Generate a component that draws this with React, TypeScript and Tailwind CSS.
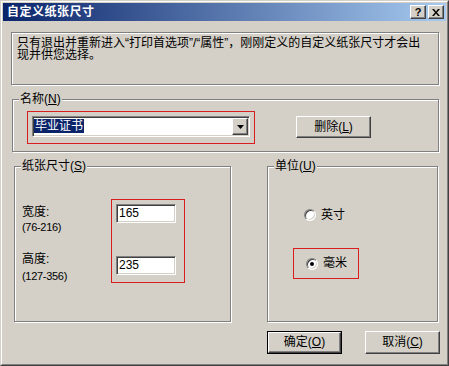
import React from "react";

const raised =
  "border border-t-white border-l-white border-r-[#404040] border-b-[#404040] shadow-[inset_-1px_-1px_0_#808080] bg-[#d4d0c8]";
const sunken =
  "border border-t-[#808080] border-l-[#808080] border-r-white border-b-white shadow-[inset_1px_1px_0_#404040,inset_-1px_-1px_0_#d4d0c8] bg-white";
const etched = "border border-[#808080] shadow-[inset_1px_1px_0_#fff,1px_1px_0_#fff]";

function Group({
  label,
  className,
  children,
}: {
  label: React.ReactNode;
  className: string;
  children?: React.ReactNode;
}) {
  return (
    <div className={`relative ${etched} ${className}`}>
      <span className="absolute left-[6px] top-[-7px] bg-[#d4d0c8] px-[1px] text-[12px] leading-[13px] whitespace-nowrap">
        {label}
      </span>
      {children}
    </div>
  );
}

function Radio({ checked }: { checked?: boolean }) {
  return (
    <div className="w-[12px] h-[12px] shrink-0 rounded-full border border-t-[#808080] border-l-[#808080] border-r-white border-b-white bg-white shadow-[inset_1px_1px_0_#404040,inset_-1px_-1px_0_#d4d0c8] flex items-center justify-center">
      {checked && <div className="w-[4px] h-[4px] rounded-full bg-black" />}
    </div>
  );
}

function U({ children }: { children: React.ReactNode }) {
  return <span className="underline underline-offset-[1px]">{children}</span>;
}

export default function App() {
  return (
    <div className="w-[449px] h-[366px] bg-[#d4d0c8] border border-t-[#d4d0c8] border-l-[#d4d0c8] border-r-[#404040] border-b-[#404040] font-['Liberation_Sans','Noto_Sans_CJK_SC',sans-serif] text-black text-[12px]">
      <div className="h-full border border-t-white border-l-white border-r-[#808080] border-b-[#808080] p-px flex flex-col">
        {/* Title bar */}
        <div className="h-[18px] shrink-0 flex items-center bg-[linear-gradient(to_right,#0a246a,#a6caf0)] pl-[4px] pr-[2px]">
          <span className="text-white font-bold text-[12px] leading-[14px] tracking-[0.5px]">
            自定义纸张尺寸
          </span>
          <div className="ml-auto flex gap-[2px]">
            <div className={`${raised} w-[16px] h-[14px] flex items-center justify-center`}>
              <span className="font-bold text-[11px] leading-[11px] font-['Liberation_Sans',sans-serif]">?</span>
            </div>
            <div className={`${raised} w-[16px] h-[14px] flex items-center justify-center`}>
              <svg width="8" height="7" viewBox="0 0 8 7">
                <path d="M0 0h2l2 2.5L6 0h2L5 3.5 8 7H6L4 4.5 2 7H0l3-3.5z" fill="black" />
              </svg>
            </div>
          </div>
        </div>

        {/* Info box */}
        <div className={`${etched} ml-[8px] mt-[11px] w-[428px] h-[53px] shrink-0 pl-[5px] pt-[4px] leading-[12px] whitespace-nowrap`}>
          <div className="h-[12px]">只有退出并重新进入“打印首选项”/“属性”，刚刚定义的自定义纸张尺寸才会出</div>
          <div className="h-[12px]">现并供您选择。</div>
        </div>

        {/* Name group */}
        <Group
          label={
            <>
              名称(<U>N</U>)
            </>
          }
          className="ml-[9px] mt-[14px] w-[427px] h-[53px] shrink-0 flex items-start"
        >
          <div className="ml-[14px] mt-[11px] w-[228px] h-[33px] border border-[#d81e1e]">
            <div className={`${sunken} ml-[4px] mt-[4px] w-[218px] h-[21px] p-px flex`}>
              <span className="bg-[#0a246a] text-white h-[14px] mt-px leading-[14px] px-px">毕业证书</span>
              <div className={`${raised} ml-auto w-[16px] h-[17px] flex items-center justify-center`}>
                <svg width="7" height="4" viewBox="0 0 7 4">
                  <path d="M0 0h7L3.5 4z" fill="black" />
                </svg>
              </div>
            </div>
          </div>
          <div className={`${raised} ml-[41px] mt-[16px] w-[75px] h-[22px] flex items-center justify-center leading-[13px]`}>
            删除(<U>L</U>)
          </div>
        </Group>

        {/* Paper size + unit */}
        <div className="flex mt-[14px] shrink-0">
          <Group
            label={
              <>
                纸张尺寸(<U>S</U>)
              </>
            }
            className="ml-[11px] w-[217px] h-[156px] flex items-start"
          >
            <div className="ml-[7px] w-[89px] flex flex-col">
              <div className="mt-[39px] leading-[13px]">宽度:</div>
              <div className="mt-[2px] leading-[13px] text-[11px] tracking-[-0.3px]">(76-216)</div>
              <div className="mt-[19px] leading-[13px]">高度:</div>
              <div className="mt-[4px] leading-[13px] text-[11px] tracking-[-0.3px]">(127-356)</div>
            </div>
            <div className="mt-[32px] w-[74px] h-[84px] border border-[#d81e1e] flex flex-col">
              <div className={`${sunken} ml-[4px] mt-[4px] w-[60px] h-[19px] pl-[2px] flex items-center leading-[13px]`}>
                165
              </div>
              <div className={`${sunken} ml-[4px] mt-[33px] w-[60px] h-[19px] pl-[2px] flex items-center leading-[13px]`}>
                235
              </div>
            </div>
          </Group>

          <Group
            label={
              <>
                单位(<U>U</U>)
              </>
            }
            className="ml-[36px] w-[171px] h-[156px] flex flex-col"
          >
            <div className="ml-[36px] mt-[42px] h-[12px] flex items-center">
              <Radio />
              <span className="ml-[5px] leading-[13px]">英寸</span>
            </div>
            <div className="ml-[25px] mt-[27px] w-[66px] h-[31px] border border-[#d81e1e] flex items-center">
              <div className="ml-[12px] flex items-center">
                <Radio checked />
                <span className="ml-[5px] leading-[13px]">毫米</span>
              </div>
            </div>
          </Group>
        </div>

        {/* Bottom buttons */}
        <div className="flex mt-[9px] shrink-0">
          <div className="ml-[264px] w-[75px] h-[23px] border border-black">
            <div className={`${raised} w-full h-full flex items-center justify-center leading-[13px]`}>
              确定(<U>O</U>)
            </div>
          </div>
          <div className={`${raised} ml-[23px] w-[75px] h-[23px] flex items-center justify-center leading-[13px]`}>
            取消(<U>C</U>)
          </div>
        </div>
      </div>
    </div>
  );
}
